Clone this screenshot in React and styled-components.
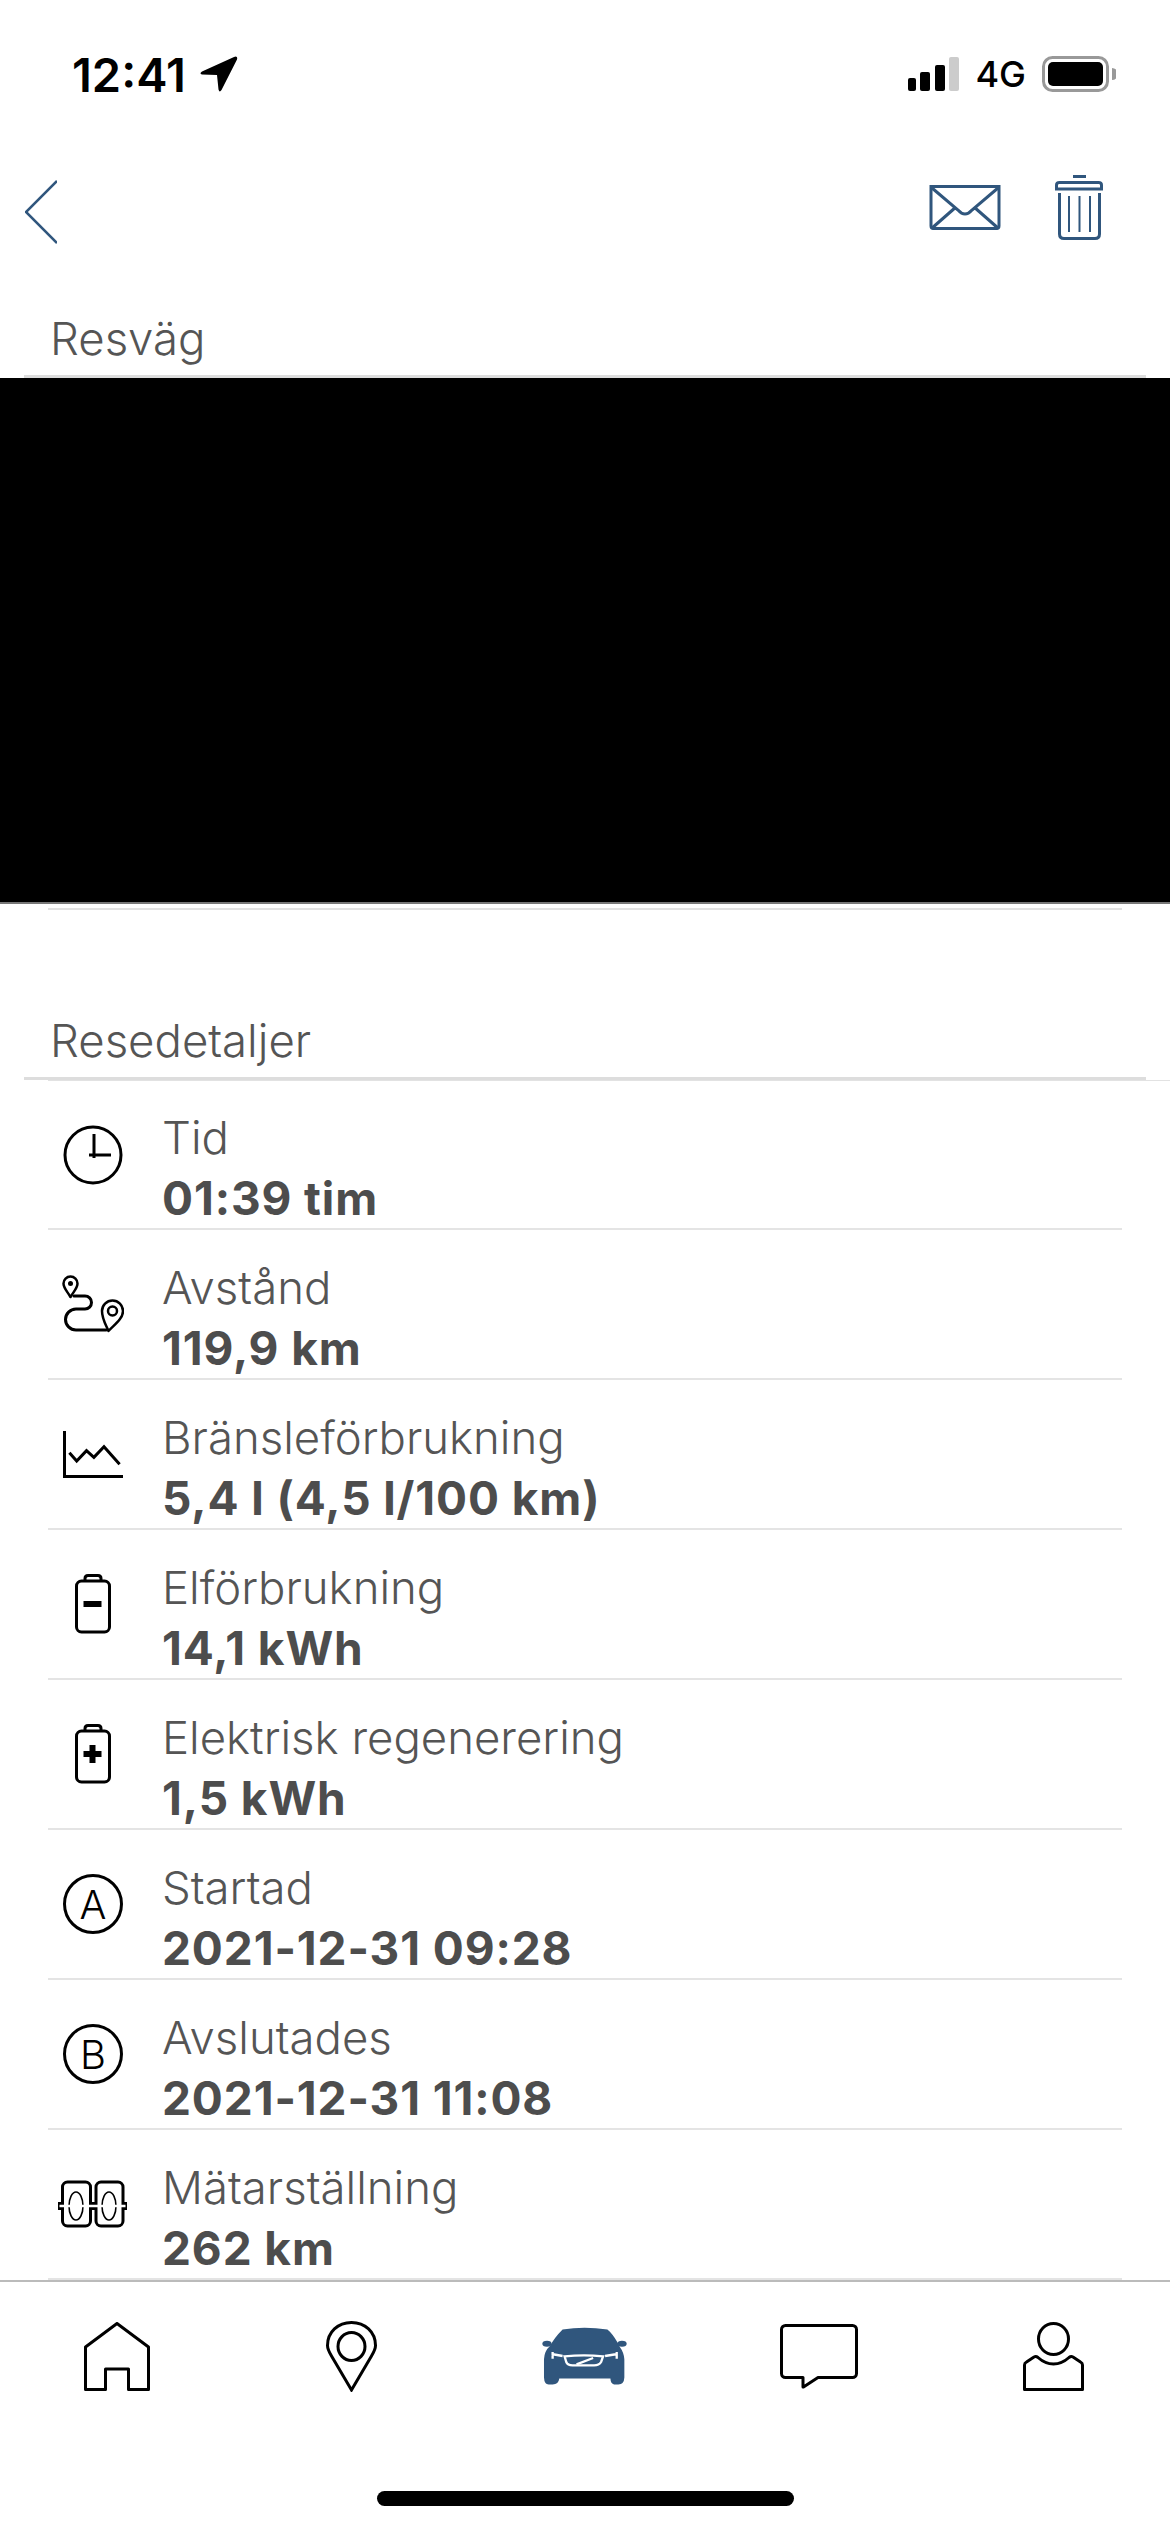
import React from "react";
import styled, { createGlobalStyle } from "styled-components";

const BLUE = "#30567d";

const GlobalStyle = createGlobalStyle`
  html, body {
    margin: 0;
    padding: 0;
    background: #fff;
    font-family: Inter, "Liberation Sans", sans-serif;
  }
`;

const RouteIcon = () => (
  <svg width="62" height="58" viewBox="0 0 62 58" fill="none" stroke="#000" strokeWidth="3">
    <path d="M8.5 22C5 16 1.5 13 1.5 8.5a7 7 0 0 1 14 0C15.5 13 12 16 8.5 22Z" strokeWidth="2.5" strokeLinejoin="round" />
    <circle cx="8.5" cy="8.5" r="2.5" fill="#000" stroke="none" />
    <path d="M12 21H23a6.5 6.5 0 0 1 0 13H14a10.5 10.5 0 0 0 0 21H44" strokeLinecap="round" />
    <path d="M46.5 56C44 50 40 44 40 36a10.5 10.5 0 0 1 21 0C61 44 52 50 46.5 56Z" strokeWidth="2.5" strokeLinejoin="round" />
    <circle cx="50.5" cy="36" r="4.5" strokeWidth="2.5" />
  </svg>
);

const ClockIcon = () => (
  <svg width="60" height="60" viewBox="0 0 60 60" fill="none" stroke="#000" strokeWidth="3">
    <circle cx="30" cy="30" r="28" />
    <path d="M31 9V33M26 30H48" />
  </svg>
);

const GraphIcon = () => (
  <svg width="60" height="47" viewBox="0 0 60 47" fill="none" stroke="#000" strokeWidth="3">
    <path d="M1.5 0V45.5H60" />
    <path d="M6.4 21.7L13.7 30L23.5 19.7L30.9 26.3L41 15.7L56.6 33.3" />
  </svg>
);

const BatteryIcon = ({ plus }) => (
  <svg width="36" height="60" viewBox="0 0 36 60" fill="none" stroke="#000" strokeWidth="3">
    <rect x="1.5" y="7" width="33" height="51" rx="5" />
    <path d="M10 7V4.5Q10 1.5 13 1.5H23Q26 1.5 26 4.5V7" />
    {plus ? <path d="M8.5 30H26.5M17.5 21V39" strokeWidth="6" /> : <path d="M8.5 30H26.5" strokeWidth="6" />}
  </svg>
);

const OdometerIcon = () => (
  <svg width="70" height="48" viewBox="0 0 70 48" fill="none" stroke="#000" strokeWidth="3">
    <rect x="4.5" y="2" width="28" height="44" rx="5" />
    <rect x="38" y="2" width="27" height="44" rx="5" />
    <ellipse cx="18" cy="26" rx="7" ry="14" strokeWidth="1.6" />
    <ellipse cx="51" cy="26" rx="7" ry="14" strokeWidth="1.6" />
    <path d="M0 22h5v8H0zM64 22h5v8h-5zM32 22h6v8h-6z" fill="#000" stroke="none" />
    <path d="M1.5 26H67.5" stroke="#fff" strokeWidth="2.5" />
  </svg>
);

const HomeIcon = () => (
  <svg width="66" height="69" viewBox="0 0 66 69" fill="none" stroke="#000" strokeWidth="3" strokeLinejoin="round">
    <path d="M1.5 25L33 1.5L64.5 25V67.5H44.5V47H21.5V67.5H1.5Z" />
  </svg>
);

const PinIcon = () => (
  <svg width="51" height="71" viewBox="0 0 51 71" fill="none" stroke="#000" strokeWidth="3">
    <path d="M25.5 69L5.5 35C2.5 30 1.5 28 1.5 24.5C1.5 11 12 1.5 25.5 1.5C39 1.5 49.5 11 49.5 24.5C49.5 28 48.5 30 45.5 35Z" />
    <ellipse cx="25.5" cy="25.5" rx="13.5" ry="14" />
  </svg>
);

const CarIcon = () => (
  <svg width="88" height="60" viewBox="65 50 265 180">
    <path
      fill={BLUE}
      d="M130 60Q195 50 265 60Q280 72 296 100L302 112Q315 130 316 150L316 205Q315 226 298 226L285 226Q275 224 274 208L120 208Q118 226 100 226L88 226Q75 226 74 205L74 150Q75 125 92 110Q105 85 130 60Z"
    />
    <ellipse cx="83" cy="103" rx="14" ry="9" fill={BLUE} />
    <ellipse cx="309" cy="103" rx="14" ry="9" fill={BLUE} />
    <g fill="none" stroke="#fff" strokeWidth="7">
      <path d="M136 141Q195 135 252 141L246 158Q240 168 225 168L160 168Q145 168 141 158Z" />
      <path d="M172 165L222 146M97 134L130 140M100 128V148M258 140L295 134M293 128V148" />
    </g>
  </svg>
);

const ChatIcon = () => (
  <svg width="78" height="65" viewBox="0 0 78 65" fill="none" stroke="#000" strokeWidth="3" strokeLinejoin="round">
    <path d="M5.5 1.5H72.5a4 4 0 0 1 4 4V49.5a4 4 0 0 1-4 4H38L23.5 63H23V53.5H5.5a4 4 0 0 1-4-4V5.5a4 4 0 0 1 4-4Z" />
  </svg>
);

const UserIcon = () => (
  <svg width="61" height="69" viewBox="0 0 61 69" fill="none" stroke="#000" strokeWidth="3" strokeLinejoin="round">
    <ellipse cx="30.5" cy="17" rx="15" ry="15.5" />
    <path d="M1.5 67.5V43Q1.5 41 3.5 40L11 35Q13 34 15 35.5C20 40 25 42 30.5 42C36 42 41 40 46 35.5Q48 34 50 35L57.5 40Q59.5 41 59.5 43V67.5Z" />
  </svg>
);

const App = () => {
  const details = [
    { label: "Tid", value: "01:39 tim", icon: <ClockIcon /> },
    { label: "Avstånd", value: "119,9 km", icon: <RouteIcon /> },
    { label: "Bränsleförbrukning", value: "5,4 l (4,5 l/100 km)", icon: <GraphIcon /> },
    { label: "Elförbrukning", value: "14,1 kWh", icon: <BatteryIcon /> },
    { label: "Elektrisk regenerering", value: "1,5 kWh", icon: <BatteryIcon plus /> },
    { label: "Startad", value: "2021-12-31 09:28", icon: <LetterBadge>A</LetterBadge> },
    { label: "Avslutades", value: "2021-12-31 11:08", icon: <LetterBadge>B</LetterBadge> },
    { label: "Mätarställning", value: "262 km", icon: <OdometerIcon /> },
  ];
  const navItems = [<HomeIcon />, <PinIcon />, <CarIcon />, <ChatIcon />, <UserIcon />];

  return (
    <Page>
      <GlobalStyle />
      <StatusBar>
        <TimeGroup>
          <Time>12:41</Time>
          <svg width="38" height="36" viewBox="0 0 38 36">
            <path d="M34 1Q38-.5 37 3.5L21.5 34Q19.5 37 18.5 33.5L17 19L2 18.5Q-1 17.5 2 15.5Z" />
          </svg>
        </TimeGroup>
        <StatusRight>
          <svg width="51" height="34" viewBox="0 0 51 34">
            <rect x="0" y="21" width="8" height="13" rx="2" />
            <rect x="12" y="15" width="10" height="19" rx="2" />
            <rect x="27" y="8" width="10" height="26" rx="2" />
            <rect x="41" y="0" width="10" height="34" rx="2" fill="#ccc" />
          </svg>
          <Network>4G</Network>
          <svg width="74" height="36" viewBox="0 0 74 36">
            <rect x="1.5" y="1.5" width="64" height="33" rx="9" fill="none" stroke="#999" strokeWidth="3" />
            <rect x="6" y="6" width="55" height="24" rx="5" />
            <path d="M70 12a6 6 0 0 1 0 12Z" fill="#999" />
          </svg>
        </StatusRight>
      </StatusBar>

      <Header>
        <svg width="32" height="64" viewBox="0 0 32 64" fill="none" stroke={BLUE} strokeWidth="2.5">
          <path d="M32 1L1 32L32 63" />
        </svg>
        <HeaderActions>
          <svg width="72" height="45" viewBox="0 0 72 45" fill="none" stroke={BLUE} strokeWidth="3">
            <path d="M2 1.5H70V41Q70 43.5 67.5 43.5H4.5Q2 43.5 2 41Z" />
            <path d="M3 3L29 25Q36 33 43 25L69 3M2.5 43.5L27 22M69.5 43.5L45 22" />
          </svg>
          <svg width="48" height="65" viewBox="0 0 48 65" fill="none" stroke={BLUE} strokeWidth="3">
            <path d="M18 1.5H31" />
            <path d="M1.5 14V10Q1.5 7.5 4.5 7.5H43.5Q46.5 7.5 46.5 10V14Z" />
            <path d="M4.5 18V59Q4.5 63.5 9 63.5H40Q44.5 63.5 44.5 59V18" />
            <path d="M14 21V57M24.5 21V57M35 21V57" strokeWidth="2" />
          </svg>
        </HeaderActions>
      </Header>

      <SectionHead>
        <SectionTitle>Resväg</SectionTitle>
      </SectionHead>
      <MapCover />
      <MapRule />

      <DetailsHead>
        <SectionTitle>Resedetaljer</SectionTitle>
      </DetailsHead>
      <DetailList>
        {details.map((item) => (
          <DetailRow key={item.label}>
            <IconCell>{item.icon}</IconCell>
            <DetailText>
              <DetailLabel>{item.label}</DetailLabel>
              <DetailValue>{item.value}</DetailValue>
            </DetailText>
          </DetailRow>
        ))}
      </DetailList>

      <BottomNav>
        {navItems.map((icon, i) => (
          <NavItem key={i}>{icon}</NavItem>
        ))}
      </BottomNav>
      <HomeIndicator />
    </Page>
  );
};

export default App;

const Page = styled.div`
  width: 1170px;
  height: 2532px;
  overflow: hidden;
  display: flex;
  flex-direction: column;
  background: #fff;
`;

const StatusBar = styled.div`
  height: 148px;
  flex: none;
  display: flex;
  align-items: center;
  justify-content: space-between;
  padding: 0 54px 0 72px;
  box-sizing: border-box;
`;

const TimeGroup = styled.div`
  display: flex;
  align-items: center;
  gap: 14px;
`;

const Time = styled.span`
  font-size: 47px;
  font-weight: 600;
  color: #000;
`;

const StatusRight = styled.div`
  display: flex;
  align-items: center;
  gap: 16px;
`;

const Network = styled.span`
  font-size: 36px;
  font-weight: 500;
  color: #000;
`;

const Header = styled.div`
  height: 128px;
  flex: none;
  display: flex;
  align-items: center;
  justify-content: space-between;
  padding: 0 67px 0 25px;
  box-sizing: border-box;
`;

const HeaderActions = styled.div`
  display: flex;
  align-items: center;
  gap: 54px;
  margin-top: -10px;
`;

const SectionHead = styled.div`
  height: 102px;
  flex: none;
  margin: 0 24px;
  padding: 0 0 11px 26px;
  box-sizing: border-box;
  display: flex;
  align-items: flex-end;
  border-bottom: 3px solid #ddd;
`;

const DetailsHead = styled(SectionHead)`
  margin-top: 68px;
`;

const SectionTitle = styled.h2`
  margin: 0;
  font-size: 45.5px;
  line-height: 50px;
  font-weight: 300;
  color: #555;
`;

const MapCover = styled.div`
  height: 524px;
  flex: none;
  background: #000;
  border-bottom: 2px solid #777;
`;

const MapRule = styled.div`
  height: 2px;
  flex: none;
  margin: 4px 48px 0;
  background: #e2e2e2;
`;

const DetailList = styled.div`
  flex: none;
  margin-left: 48px;
  border-top: 1px solid #e2e2e2;
`;

const DetailRow = styled.div`
  height: 150px;
  margin-right: 48px;
  box-sizing: border-box;
  display: flex;
  align-items: center;
  border-bottom: 2px solid #e4e4e4;

  &:first-child {
    height: 149px;
  }
`;

const IconCell = styled.div`
  width: 90px;
  flex: none;
  display: flex;
  justify-content: center;
`;

const DetailText = styled.div`
  margin-left: 24px;
  padding-top: 27px;
  display: flex;
  flex-direction: column;
`;

const DetailLabel = styled.span`
  font-size: 45.5px;
  line-height: 60px;
  font-weight: 300;
  color: #555;
`;

const DetailValue = styled.span`
  font-size: 46px;
  line-height: 60px;
  font-weight: 700;
  letter-spacing: 0.9px;
  color: #4d4d4d;
`;

const LetterBadge = styled.span`
  width: 60px;
  height: 60px;
  box-sizing: border-box;
  border: 3px solid #000;
  border-radius: 50%;
  display: flex;
  align-items: center;
  justify-content: center;
  font-size: 40px;
  font-weight: 300;
  color: #000;
`;

const BottomNav = styled.nav`
  flex: none;
  height: 170px;
  box-sizing: border-box;
  border-top: 2px solid #bbb;
  display: grid;
  grid-template-columns: repeat(5, 1fr);
  padding-top: 38px;
`;

const NavItem = styled.div`
  height: 72px;
  display: flex;
  align-items: center;
  justify-content: center;
`;

const HomeIndicator = styled.div`
  flex: none;
  width: 417px;
  height: 15px;
  margin: 41px auto 0;
  border-radius: 8px;
  background: #000;
`;
